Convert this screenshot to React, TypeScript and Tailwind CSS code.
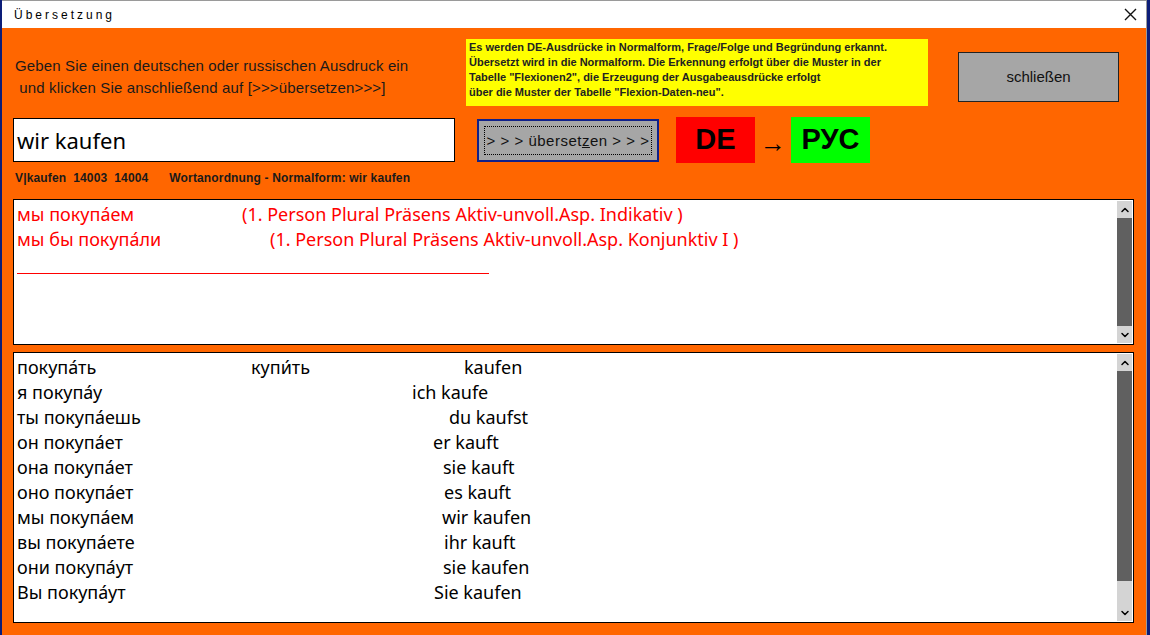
import { ChevronDown, ChevronUp } from 'lucide-react'

const font = "font-['Liberation_Sans',Arial,sans-serif]"
const listFont = "font-['Noto_Sans',Arial,sans-serif]"

const results = [
	{ ru: 'мы покупа́ем', info: '(1. Person Plural Präsens Aktiv-unvoll.Asp. Indikativ )', w: 'w-[225px]' },
	{ ru: 'мы бы покупа́ли', info: '(1. Person Plural Präsens Aktiv-unvoll.Asp. Konjunktiv I )', w: 'w-[253px]' },
]

const forms = [
	{ ru: 'я покупа́у', de: 'ich kaufe', w: 'w-[395px]' },
	{ ru: 'ты покупа́ешь', de: 'du kaufst', w: 'w-[432px]' },
	{ ru: 'он покупа́ет', de: 'er kauft', w: 'w-[416px]' },
	{ ru: 'она покупа́ет', de: 'sie kauft', w: 'w-[426px]' },
	{ ru: 'оно покупа́ет', de: 'es kauft', w: 'w-[427px]' },
	{ ru: 'мы покупа́ем', de: 'wir kaufen', w: 'w-[425px]' },
	{ ru: 'вы покупа́ете', de: 'ihr kauft', w: 'w-[427px]' },
	{ ru: 'они покупа́ут', de: 'sie kaufen', w: 'w-[426px]' },
	{ ru: 'Вы покупа́ут', de: 'Sie kaufen', w: 'w-[417px]' },
]

// classic windows-style vertical scrollbar
const ScrollBar = ({ track = false }: { track?: boolean }) => (
	<div className="w-[15px] my-[1px] mr-[1px] flex flex-col bg-[#d4d4d4]">
		<div className="h-[17px] flex items-center justify-center">
			<ChevronUp size={12} strokeWidth={3} className="text-black" />
		</div>
		<div className="flex-1 flex flex-col">
			<div className="flex-1 bg-[#606060]" />
			{track && <div className="h-[23px]" />}
		</div>
		<div className="h-[17px] flex items-center justify-center">
			<ChevronDown size={12} strokeWidth={3} className="text-black" />
		</div>
	</div>
)

export default function App() {
	return (
		<div className={`w-[1150px] h-[635px] bg-[#0c1d78] overflow-hidden ${font}`}>
			<div className="ml-[2px] w-[1145px] h-[635px] flex flex-col border-t border-r border-[#9a9a9a]">
				{/* title bar */}
				<div className="h-[27px] bg-white flex items-center justify-between pl-[12px] pr-[9px]">
					<span className="text-[12px] tracking-[3px] text-black">Übersetzung</span>
					<svg width="13" height="13" viewBox="0 0 13 13" className="text-[#111]">
						<path d="M1 1 L12 12 M12 1 L1 12" stroke="currentColor" strokeWidth="1.4" />
					</svg>
				</div>

				<div className="flex-1 bg-[#ff6600] flex flex-col px-[11px]">
					{/* header row */}
					<div className="flex items-start pt-[11px]">
						<div className="w-[453px] pt-[16px] pl-[2px] text-[15px] leading-[22px] tracking-[0.15px] text-[#1a1a1a] whitespace-pre">
							<div>Geben Sie einen deutschen oder russischen Ausdruck ein</div>
							<div> und klicken Sie anschließend auf [&gt;&gt;&gt;übersetzen&gt;&gt;&gt;]</div>
						</div>
						<div className="w-[462px] h-[67px] bg-[#ffff00] px-[3px] pt-[1px] text-[11px] leading-[15px] font-bold text-[#222]">
							<div>Es werden DE-Ausdrücke in Normalform, Frage/Folge und Begründung erkannt.</div>
							<div>Übersetzt wird in die Normalform. Die Erkennung erfolgt über die Muster in der</div>
							<div>Tabelle "Flexionen2", die Erzeugung der Ausgabeausdrücke erfolgt</div>
							<div>über die Muster der Tabelle "Flexion-Daten-neu".</div>
						</div>
						<button className="ml-[30px] mt-[13px] w-[161px] h-[50px] bg-[#a6a6a6] border border-[#222] text-[15px] text-[#111]">
							schließen
						</button>
					</div>

					{/* input row */}
					<div className="flex items-center mt-[11px] h-[46px]">
						<div className={`w-[442px] h-[44px] bg-white border border-black flex items-center px-[3px] text-[22px] text-black ${listFont}`}>
							wir kaufen
						</div>
						<button className="ml-[22px] w-[182px] h-[43px] bg-[#a6a6a6] border-2 border-[#10208a] p-[5px]">
							<div className="h-full border border-dotted border-black flex items-center justify-center pt-[2px] text-[15px] tracking-[0.5px] text-[#111] whitespace-pre">
								&gt; &gt; &gt; überset<span className="underline">z</span>en &gt; &gt; &gt;
							</div>
						</button>
						<div className="ml-[17px] w-[79px] h-[46px] bg-[#ff0000] flex items-center justify-center text-[29px] font-bold text-black">
							DE
						</div>
						<div className="w-[36px] text-center text-[26px] text-black leading-none pt-[6px]">→</div>
						<div className="w-[79px] h-[46px] bg-[#00ff00] flex items-center justify-center text-[29px] font-bold text-black">
							РУС
						</div>
					</div>

					{/* info line */}
					<div className="mt-[5px] pl-[2px] h-[20px] text-[12px] leading-[20px] font-semibold tracking-[0.15px] text-[#1a1a1a] whitespace-pre">
						V|kaufen  14003  14004      Wortanordnung - Normalform: wir kaufen
					</div>

					{/* result box */}
					<div className="mt-[11px] w-[1121px] h-[146px] bg-white border border-black flex">
						<div className={`flex-1 pl-[3px] pt-[2px] text-[18px] leading-[25px] text-[#ff0000] ${listFont}`}>
							{results.map((r) => (
								<div key={r.ru} className="flex">
									<span className={r.w}>{r.ru}</span>
									<span>{r.info}</span>
								</div>
							))}
							<div className="mt-[21px] w-[472px] h-px bg-[#ff0000]" />
						</div>
						<ScrollBar />
					</div>

					{/* conjugation box */}
					<div className="mt-[7px] w-[1121px] h-[271px] bg-white border border-black flex">
						<div className={`flex-1 pl-[3px] pt-[2px] text-[18px] leading-[25px] text-black ${listFont}`}>
							<div className="flex">
								<span className="w-[234px]">покупа́ть</span>
								<span className="w-[213px]">купи́ть</span>
								<span>kaufen</span>
							</div>
							{forms.map((f) => (
								<div key={f.ru} className="flex">
									<span className={f.w}>{f.ru}</span>
									<span>{f.de}</span>
								</div>
							))}
						</div>
						<ScrollBar track />
					</div>
				</div>
			</div>
		</div>
	)
}
